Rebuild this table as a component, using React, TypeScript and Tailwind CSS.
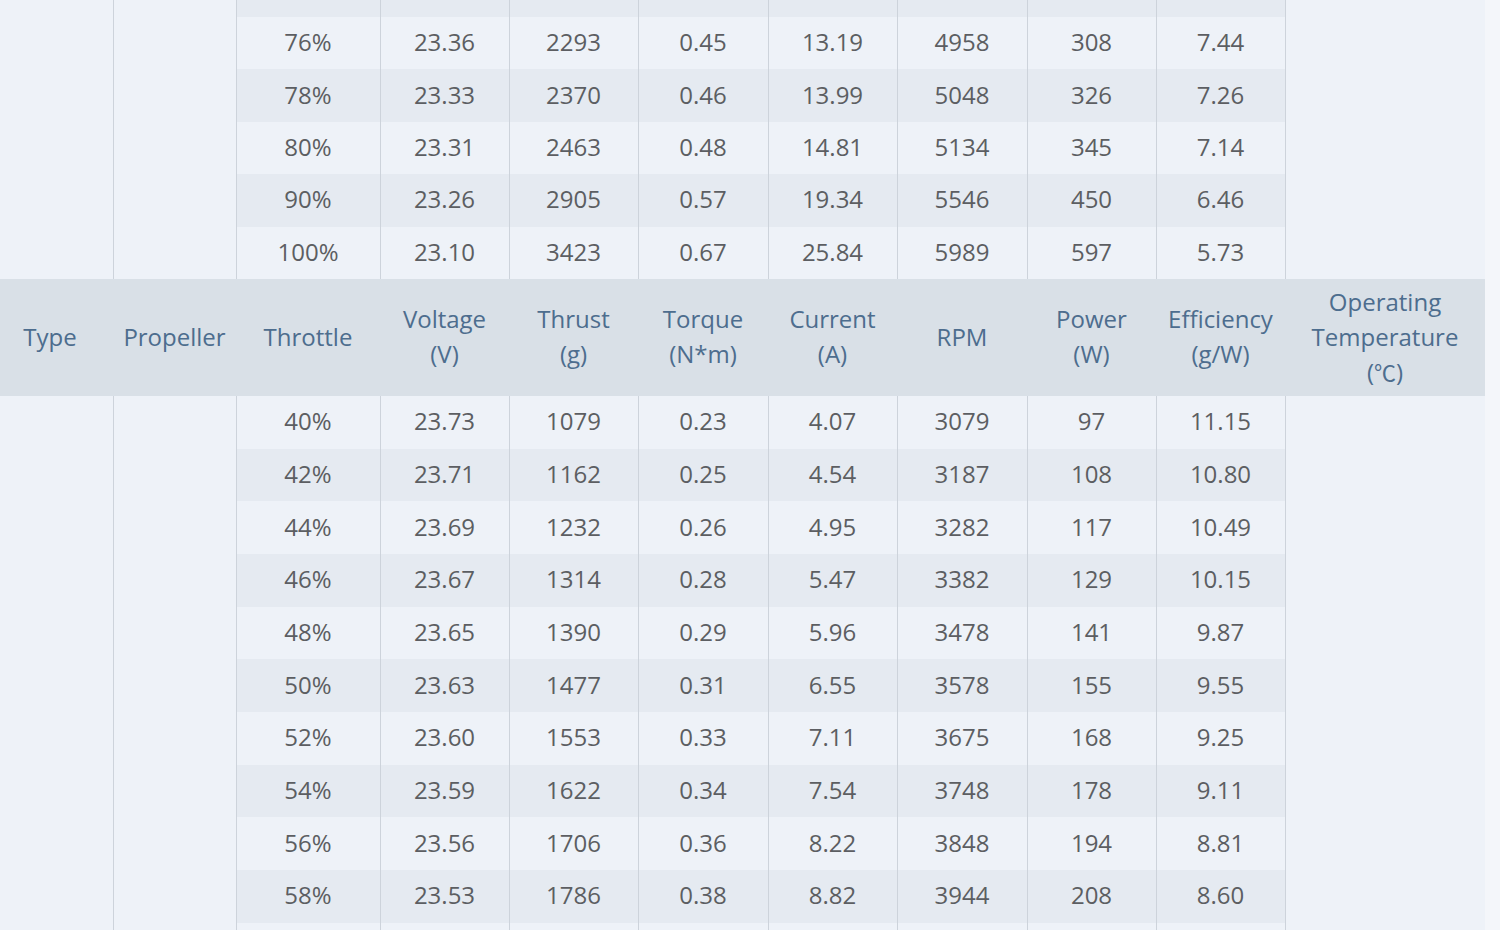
import React from "react";

type Row = string[];

// throttle, voltage, thrust, torque, current, rpm, power, efficiency
const upperRows: Row[] = [
  ["76%", "23.36", "2293", "0.45", "13.19", "4958", "308", "7.44"],
  ["78%", "23.33", "2370", "0.46", "13.99", "5048", "326", "7.26"],
  ["80%", "23.31", "2463", "0.48", "14.81", "5134", "345", "7.14"],
  ["90%", "23.26", "2905", "0.57", "19.34", "5546", "450", "6.46"],
  ["100%", "23.10", "3423", "0.67", "25.84", "5989", "597", "5.73"],
];

const lowerRows: Row[] = [
  ["40%", "23.73", "1079", "0.23", "4.07", "3079", "97", "11.15"],
  ["42%", "23.71", "1162", "0.25", "4.54", "3187", "108", "10.80"],
  ["44%", "23.69", "1232", "0.26", "4.95", "3282", "117", "10.49"],
  ["46%", "23.67", "1314", "0.28", "5.47", "3382", "129", "10.15"],
  ["48%", "23.65", "1390", "0.29", "5.96", "3478", "141", "9.87"],
  ["50%", "23.63", "1477", "0.31", "6.55", "3578", "155", "9.55"],
  ["52%", "23.60", "1553", "0.33", "7.11", "3675", "168", "9.25"],
  ["54%", "23.59", "1622", "0.34", "7.54", "3748", "178", "9.11"],
  ["56%", "23.56", "1706", "0.36", "8.22", "3848", "194", "8.81"],
  ["58%", "23.53", "1786", "0.38", "8.82", "3944", "208", "8.60"],
];

const headers: string[][] = [
  ["Type"],
  ["Propeller"],
  ["Throttle"],
  ["Voltage", "(V)"],
  ["Thrust", "(g)"],
  ["Torque", "(N*m)"],
  ["Current", "(A)"],
  ["RPM"],
  ["Power", "(W)"],
  ["Efficiency", "(g/W)"],
  ["Operating", "Temperature"],
];

const cell = "border-r border-[#cdd3db] p-0 text-center align-middle";
const valueCell = `${cell} pb-[3px]`;

function SpanCells({ rows }: { rows: number }) {
  return (
    <>
      <td rowSpan={rows} className={`${cell} bg-[#eef2f8]`} />
      <td rowSpan={rows} className={`${cell} bg-[#eef2f8]`} />
    </>
  );
}

function DataRow({ row, dark, height, first, spanRows }: { row: Row; dark: boolean; height: string; first?: boolean; spanRows: number }) {
  return (
    <tr className={`${height} ${dark ? "bg-[#e5eaf1]" : "bg-[#eef2f8]"}`}>
      {first && <SpanCells rows={spanRows} />}
      {row.map((v, i) => (
        <td key={i} className={valueCell}>
          {v}
        </td>
      ))}
      {first && <td rowSpan={spanRows} className="p-0 bg-[#eef2f8]" />}
    </tr>
  );
}

export default function App() {
  return (
    <div className="h-[930px] w-[1500px] overflow-hidden bg-[#f4f6fa]" style={{ fontFamily: '"Open Sans", "Noto Sans", "DejaVu Sans", sans-serif' }}>
      <table className="w-[1485px] table-fixed border-collapse text-[24px] leading-[35px] text-[#5c5e62]">
        <colgroup>
          <col className="w-[113px]" />
          <col className="w-[123px]" />
          <col className="w-[144px]" />
          <col className="w-[129px]" />
          <col className="w-[129px]" />
          <col className="w-[130px]" />
          <col className="w-[129px]" />
          <col className="w-[130px]" />
          <col className="w-[129px]" />
          <col className="w-[129px]" />
          <col className="w-[200px]" />
        </colgroup>

        <tbody>
          {/* tail of the previous block */}
          <tr className="h-[17px] bg-[#e5eaf1]">
            <SpanCells rows={6} />
            {Array.from({ length: 8 }).map((_, i) => (
              <td key={i} className={cell} />
            ))}
            <td rowSpan={6} className="p-0 bg-[#eef2f8]" />
          </tr>
          {upperRows.map((r, i) => (
            <tr key={r[0]} className={`h-[52.4px] ${i % 2 === 1 ? "bg-[#e5eaf1]" : "bg-[#eef2f8]"}`}>
              {r.map((v, j) => (
                <td key={j} className={valueCell}>
                  {v}
                </td>
              ))}
            </tr>
          ))}

          {/* repeated header row */}
          <tr className="h-[117px] bg-[#d9e0e7] text-[#4d6d8e]">
            {headers.map((h, i) => (
              <th key={i} className={`p-0 pb-[2px] text-center align-middle font-normal ${i === 0 ? "pr-[13px]" : ""}`}>
                {h.map((line) => (
                  <div key={line}>{line}</div>
                ))}
                {i === 10 && (
                  <div>
                    (<span style={{ fontFamily: '"Noto Sans CJK SC", sans-serif' }} className="text-[22px]">℃</span>)
                  </div>
                )}
              </th>
            ))}
          </tr>

          {lowerRows.map((r, i) => (
            <DataRow key={r[0]} row={r} dark={i % 2 === 1} height="h-[52.7px]" first={i === 0} spanRows={lowerRows.length + 1} />
          ))}
          <tr className="h-[10px] bg-[#eef2f8]">
            {Array.from({ length: 8 }).map((_, i) => (
              <td key={i} className={cell} />
            ))}
          </tr>
        </tbody>
      </table>
    </div>
  );
}
